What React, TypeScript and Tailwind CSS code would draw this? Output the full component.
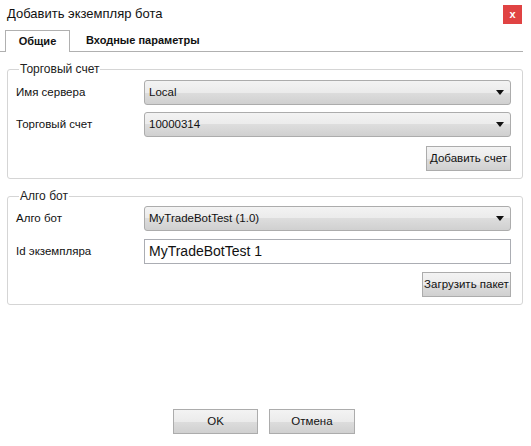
import type { ReactNode } from "react";

// Диалог «Добавить экземпляр бота» — WPF-подобная форма.

const UI_FONT = "font-['Liberation_Sans',Arial,sans-serif]";
const BTN_BG =
  "bg-[linear-gradient(#f3f3f3_0%,#ebebeb_50%,#dddddd_50%,#d0d0d0_100%)]";

function Combo({ value }: { value: string }) {
  return (
    <div
      className={`flex h-[25px] flex-1 items-center justify-between rounded-[3px] border border-[#acacac] ${BTN_BG} pl-[4px] pr-[5px] text-[11.5px] text-[#111]`}
    >
      <span>{value}</span>
      <svg width="8" height="5" viewBox="0 0 8 5" className="mr-[1px]">
        <path d="M0 0h8L4 5z" fill="#111" />
      </svg>
    </div>
  );
}

function Row({ label, children }: { label: string; children: ReactNode }) {
  return (
    <div className="flex items-center">
      <div className="w-[128px] text-[11.5px] text-[#111]">{label}</div>
      {children}
    </div>
  );
}

function Button({ children, className = "" }: { children: ReactNode; className?: string }) {
  return (
    <button
      className={`flex h-[25px] items-center justify-center whitespace-nowrap border border-[#acacac] ${BTN_BG} text-[11.5px] text-[#111] ${className}`}
    >
      {children}
    </button>
  );
}

function Group({ title, children }: { title: string; children: ReactNode }) {
  return (
    <fieldset className="ml-[7px] w-[516px] rounded-[3px] border border-[#d5d5d5] pb-[7px] pl-[8px] pr-[11px]">
      <legend className="ml-[3px] px-[1px] text-[12px] leading-[16px] text-[#222]">{title}</legend>
      {children}
    </fieldset>
  );
}

export default function App() {
  return (
    <div className={`h-[446px] w-[531px] overflow-hidden bg-white ${UI_FONT}`}>
      {/* заголовок */}
      <div className="flex h-[30px] items-start justify-between">
        <div className="pl-[7px] pt-[4px] text-[13px] text-[#111]">Добавить экземпляр бота</div>
        <button className="mr-[9px] mt-[5px] flex h-[19px] w-[19px] items-center justify-center bg-[#e04343] text-[11px] font-bold leading-none text-white">
          x
        </button>
      </div>

      {/* вкладки */}
      <div className="flex h-[22px] w-[523px] items-end border-b border-[#b0b0b0] text-[11px] font-bold text-[#111]">
        <div className="relative -mb-[1px] ml-[5px] flex h-[22px] w-[65px] items-center justify-center border border-b-0 border-[#b0b0b0] bg-white">
          Общие
        </div>
        <div className="flex h-[21px] items-center pl-[16px]">Входные параметры</div>
      </div>

      <div className="mt-[9px]">
        <Group title="Торговый счет">
          <div className="mt-[3px] flex flex-col gap-[7px]">
            <Row label="Имя сервера">
              <Combo value="Local" />
            </Row>
            <Row label="Торговый счет">
              <Combo value="10000314" />
            </Row>
          </div>
          <div className="mt-[9px] flex justify-end">
            <Button className="w-[85px]">Добавить счет</Button>
          </div>
        </Group>

        <div className="h-[9px]" />

        <Group title="Алго бот">
          <div className="mt-[2px] flex flex-col gap-[8px]">
            <Row label="Алго бот">
              <Combo value="MyTradeBotTest (1.0)" />
            </Row>
            <Row label="Id экземпляра">
              <div className="flex h-[25px] flex-1 items-center border border-[#abadb3] bg-white pl-[4px] text-[14px] text-[#111]">
                MyTradeBotTest 1
              </div>
            </Row>
          </div>
          <div className="mt-[8px] flex justify-end">
            <Button className="w-[89px]">Загрузить пакет</Button>
          </div>
        </Group>
      </div>

      {/* кнопки */}
      <div className="mt-[104px] flex gap-[11px] pl-[173px]">
        <Button className="w-[85px]">OK</Button>
        <Button className="w-[86px]">Отмена</Button>
      </div>
    </div>
  );
}
